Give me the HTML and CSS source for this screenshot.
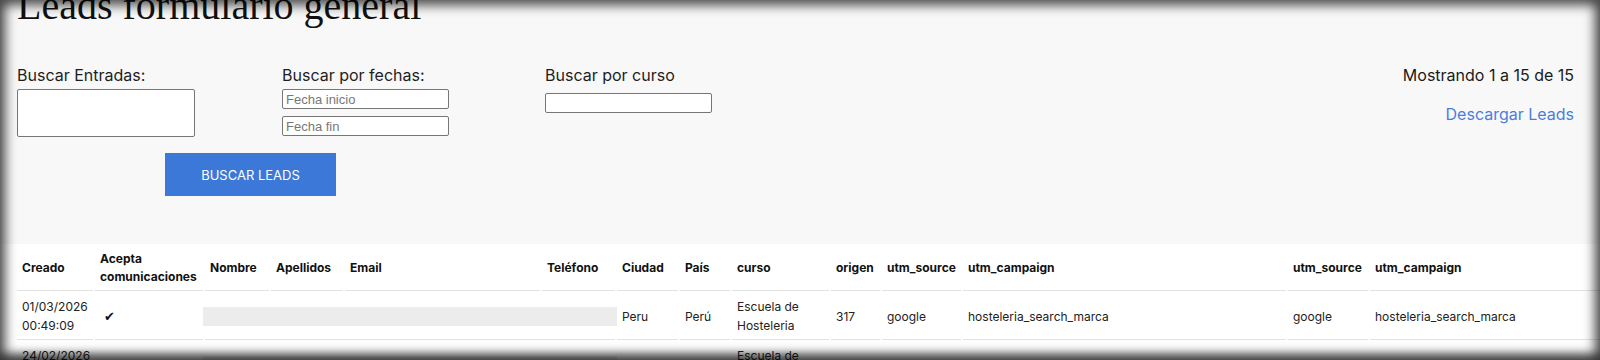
FILE: index.html
```html
<!DOCTYPE html>
<html>
<head>
	<title>Leads formulario general</title>
	<link rel="stylesheet" href="styles.css">
</head>
<body>
	<div class="page">
		<header class="top">
			<h1 class="title">Leads formulario general</h1>

			<form class="filters">
				<div class="groups">
					<div class="group">
						<label for="q">Buscar Entradas:</label>
						<textarea id="q" class="search_text"></textarea>
					</div>
					<div class="group">
						<label>Buscar por fechas:</label>
						<input class="field" type="text" placeholder="Fecha inicio">
						<input class="field" type="text" placeholder="Fecha fin">
					</div>
					<div class="group group_course">
						<label for="curso">Buscar por curso</label>
						<input id="curso" class="field" type="text">
					</div>
				</div>

				<div class="summary">
					<p class="count">Mostrando 1 a 15 de 15</p>
					<a class="download" href="#">Descargar Leads</a>
				</div>
			</form>

			<div class="actions">
				<button class="btn_search" type="button">BUSCAR LEADS</button>
			</div>
		</header>

		<section class="results">
			<table class="leads">
				<thead>
					<tr>
						<th class="c_created">Creado</th>
						<th class="c_accept">Acepta comunicaciones</th>
						<th class="c_name">Nombre</th>
						<th class="c_surname">Apellidos</th>
						<th class="c_email">Email</th>
						<th class="c_phone">Teléfono</th>
						<th class="c_city">Ciudad</th>
						<th class="c_country">País</th>
						<th class="c_course">curso</th>
						<th class="c_origin">origen</th>
						<th class="c_source">utm_source</th>
						<th class="c_campaign">utm_campaign</th>
						<th class="c_source2">utm_source</th>
						<th class="c_campaign2">utm_campaign</th>
					</tr>
				</thead>
				<tbody>
					<tr>
						<td>01/03/2026 00:49:09</td>
						<td><span class="check">✔</span></td>
						<td class="hidden_data" colspan="4"><div class="blur"></div></td>
						<td>Peru</td>
						<td>Perú</td>
						<td>Escuela de Hosteleria</td>
						<td>317</td>
						<td>google</td>
						<td>hosteleria_search_marca</td>
						<td>google</td>
						<td>hosteleria_search_marca</td>
					</tr>
					<tr>
						<td>24/02/2026 18:12:40</td>
						<td><span class="check">✔</span></td>
						<td class="hidden_data" colspan="4"><div class="blur"></div></td>
						<td>Peru</td>
						<td>Perú</td>
						<td>Escuela de Hosteleria</td>
						<td>317</td>
						<td>google</td>
						<td>hosteleria_search_marca</td>
						<td>google</td>
						<td>hosteleria_search_marca</td>
					</tr>
				</tbody>
			</table>
		</section>
	</div>

	<div class="frame"></div>
</body>
</html>
```

FILE: styles.css
```css
/* Base */

html, body { margin: 0; padding: 0; overflow: hidden; }
body { background: #f8f8f8; font-family: Inter, "Noto Sans", sans-serif; color: #1a1a1a; }

/* Top area */

.top { padding: 0 26px 0 17px; }
.title { margin: -14px 0 0; font-family: "Liberation Serif", serif; font-weight: normal; font-size: 40px; line-height: 40px; color: #111; }

.filters { display: flex; justify-content: space-between; margin-top: 40px; }
.groups { display: grid; grid-template-columns: 265px 263px 200px; align-items: start; }
.group { display: flex; flex-direction: column; align-items: flex-start; gap: 7px; }
.group label { display: block; font-size: 16px; line-height: 19px; margin-bottom: -3px; color: #1e1e1e; }
.group_course label { margin-bottom: 1px; }

.search_text { width: 178px; height: 48px; box-sizing: border-box; margin: 0; border: 1px solid #767676; border-radius: 2px; background: #fff; resize: none; }
.field { width: 167px; height: 20px; box-sizing: border-box; margin: 0; padding: 1px 3px; border: 1px solid #767676; border-radius: 2px; background: #fff; font-family: "Liberation Sans", Arial, sans-serif; font-size: 13px; }
.field::placeholder { color: #777; }

.summary { display: flex; flex-direction: column; align-items: flex-end; }
.count { margin: 0; font-size: 16px; line-height: 19px; color: #1a1a1a; }
.download { margin-top: 20px; font-size: 16px; line-height: 19px; color: #4a7fd9; text-decoration: none; }

.actions { margin-top: 16px; padding-left: 148px; }
.btn_search { width: 171px; height: 43px; border: 0; background: #3c78d8; color: #fff; font-family: Inter, sans-serif; font-size: 13px; cursor: pointer; }

/* Results table */

.results { margin-top: 48px; padding-left: 15px; background: #fff; }
.leads { table-layout: fixed; width: 1680px; border-collapse: separate; border-spacing: 2px; font-size: 12px; line-height: 19px; }
.leads th, .leads td { padding: 4px 5px; text-align: left; vertical-align: middle; border-bottom: 1px solid #e2e2e2; }
.leads th { color: #111; font-size: 12px; font-weight: bold; line-height: 18px; }
.leads td { color: #222; }

.c_created { width: 66px; }
.c_accept { width: 98px; }
.c_name { width: 54px; }
.c_surname { width: 62px; }
.c_email { width: 185px; }
.c_phone { width: 63px; }
.c_city { width: 51px; }
.c_country { width: 40px; }
.c_course { width: 87px; }
.c_origin { width: 39px; }
.c_source { width: 69px; }
.c_campaign { width: 313px; }
.c_source2 { width: 70px; }
.c_campaign2 { width: 313px; }

.check { display: inline-block; margin-left: 4px; font-family: "DejaVu Sans", sans-serif; font-size: 13px; color: #111; }
.hidden_data { padding: 0; }
.blur { height: 19px; margin: 0 -7px 0 -7px; background: #ececec; }

/* Screenshot frame shading */

.frame { position: fixed; top: 0; left: 0; right: 0; bottom: 0; pointer-events: none; box-shadow: inset 0 0 12px 5px rgba(0, 0, 0, 0.72), inset 0 -10px 8px -4px rgba(0, 0, 0, 0.3); }
```
